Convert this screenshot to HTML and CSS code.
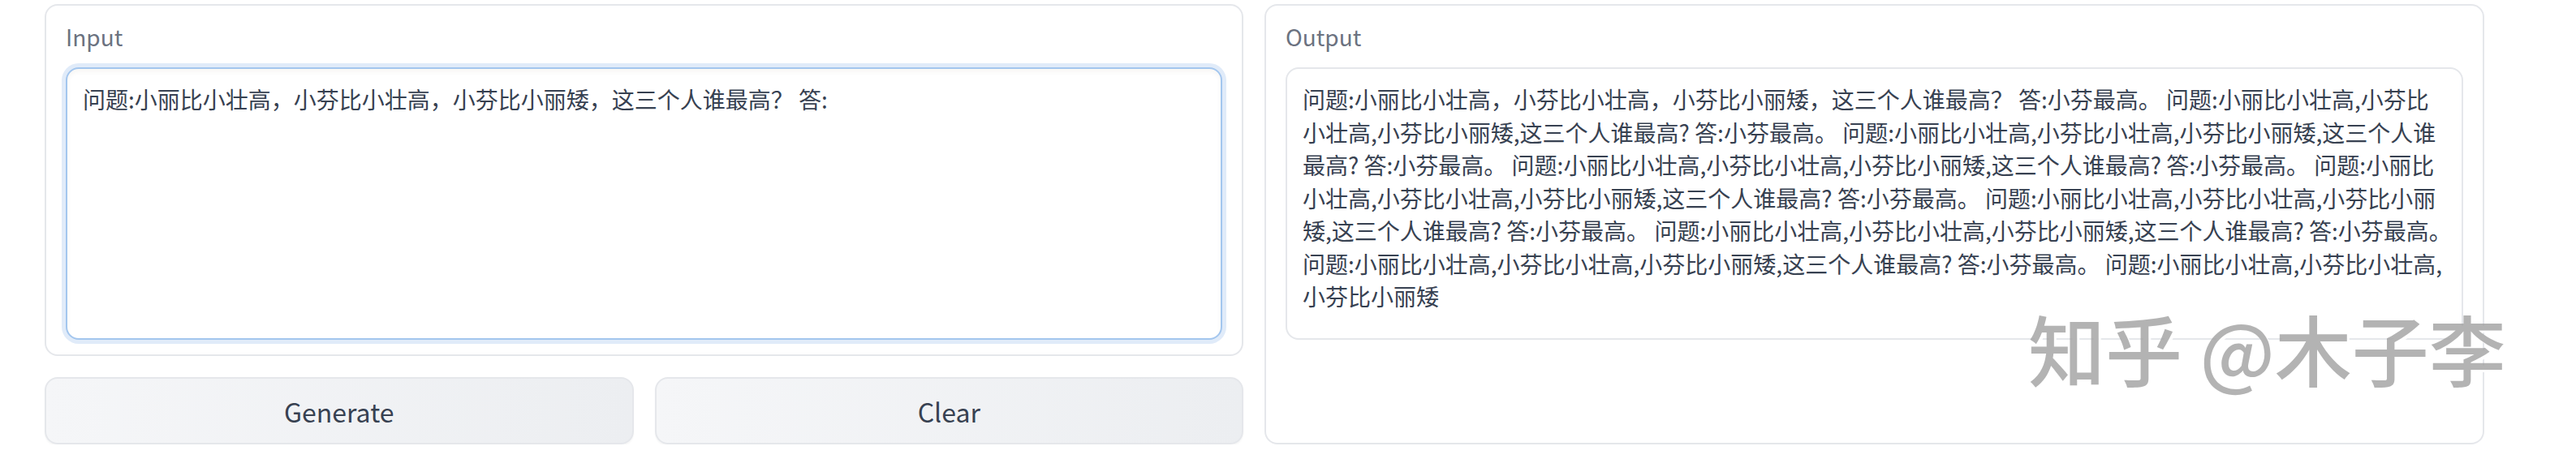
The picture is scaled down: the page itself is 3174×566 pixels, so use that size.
FILE: index.html
```html
<!DOCTYPE html>
<html lang="zh-CN">
<head>
<meta charset="utf-8">
<title>Generate</title>
<link rel="stylesheet" href="styles.css">
</head>
<body>
<div class="page">
  <div class="col col-input">
    <div class="panel">
      <div class="label">Input</div>
      <textarea class="box box-input" readonly>问题:小丽比小壮高，小芬比小壮高，小芬比小丽矮，这三个人谁最高？ 答:</textarea>
    </div>
    <div class="buttons">
      <button class="btn">Generate</button>
      <button class="btn">Clear</button>
    </div>
  </div>
  <div class="col col-output">
    <div class="panel panel-fill">
      <div class="label">Output</div>
      <div class="box box-output">
        <span class="line">问题:小丽比小壮高，小芬比小壮高，小芬比小丽矮，这三个人谁最高？ 答:小芬最高。 问题:小丽比小壮高,小芬比</span>
        <span class="line">小壮高,小芬比小丽矮,这三个人谁最高? 答:小芬最高。 问题:小丽比小壮高,小芬比小壮高,小芬比小丽矮,这三个人谁</span>
        <span class="line">最高? 答:小芬最高。 问题:小丽比小壮高,小芬比小壮高,小芬比小丽矮,这三个人谁最高? 答:小芬最高。 问题:小丽比</span>
        <span class="line">小壮高,小芬比小壮高,小芬比小丽矮,这三个人谁最高? 答:小芬最高。 问题:小丽比小壮高,小芬比小壮高,小芬比小丽</span>
        <span class="line">矮,这三个人谁最高? 答:小芬最高。 问题:小丽比小壮高,小芬比小壮高,小芬比小丽矮,这三个人谁最高? 答:小芬最高。</span>
        <span class="line">问题:小丽比小壮高,小芬比小壮高,小芬比小丽矮,这三个人谁最高? 答:小芬最高。 问题:小丽比小壮高,小芬比小壮高,</span>
        <span class="line">小芬比小丽矮</span>
      </div>
    </div>
  </div>
  <div class="watermark">知乎 @木子李</div>
</div>
</body>
</html>
```

FILE: styles.css
```css
html, body {
  margin: 0;
  padding: 0;
  background: #ffffff;
}

body {
  font-family: "Noto Sans CJK SC", "Noto Sans", sans-serif;
  color: #374151;
}

.page {
  position: relative;
  display: flex;
  align-items: stretch;
  gap: 26px;
  padding: 5px 0 0 55px;
  width: 3006px;
  height: 543px;
}

.col {
  display: flex;
  flex-direction: column;
  gap: 26px;
}

.col-input {
  width: 1477px;
}

.col-output {
  width: 1503px;
}

.panel {
  box-sizing: border-box;
  border: 2px solid #e5e7eb;
  border-radius: 16px;
  background: #ffffff;
  padding: 24px 24px 18px;
}

.panel-fill {
  flex: 1;
}

.label {
  font-size: 28px;
  line-height: 28px;
  color: #6b7280;
  margin-bottom: 24px;
}

.box {
  box-sizing: border-box;
  display: block;
  width: 100%;
  height: 336px;
  border-radius: 16px;
  padding: 17px 19px;
  font-family: "Noto Sans CJK SC", "Noto Sans", sans-serif;
  font-size: 28px;
  line-height: 40.5px;
  color: #374151;
  background: #ffffff;
}

.box-input {
  border: 2px solid #a3c6ee;
  box-shadow: 0 0 0 5px #e0ebf9, inset 0 4px 5px rgba(120, 90, 60, 0.05);
  resize: none;
  outline: none;
  overflow: hidden;
  margin: 0;
}

.box-output {
  border: 2px solid #e5e7eb;
}

.line {
  display: block;
  white-space: nowrap;
}

.buttons {
  display: flex;
  gap: 26px;
  height: 83px;
}

.btn {
  flex: 1;
  box-sizing: border-box;
  border: 2px solid #e5e7eb;
  border-radius: 16px;
  background: linear-gradient(to right, #f5f6f8, #eceef1);
  box-shadow: 0 2px 2px rgba(0, 0, 0, 0.04);
  font-family: "Noto Sans CJK SC", "Noto Sans", sans-serif;
  font-size: 32px;
  color: #374151;
  padding: 0;
}

.watermark {
  position: absolute;
  left: 2499px;
  top: 381px;
  font-size: 95px;
  line-height: 95px;
  font-weight: 500;
  color: rgba(160, 160, 160, 0.8);
  text-shadow: 3px 3px 0 rgba(255, 255, 255, 0.9);
  white-space: nowrap;
}
```
